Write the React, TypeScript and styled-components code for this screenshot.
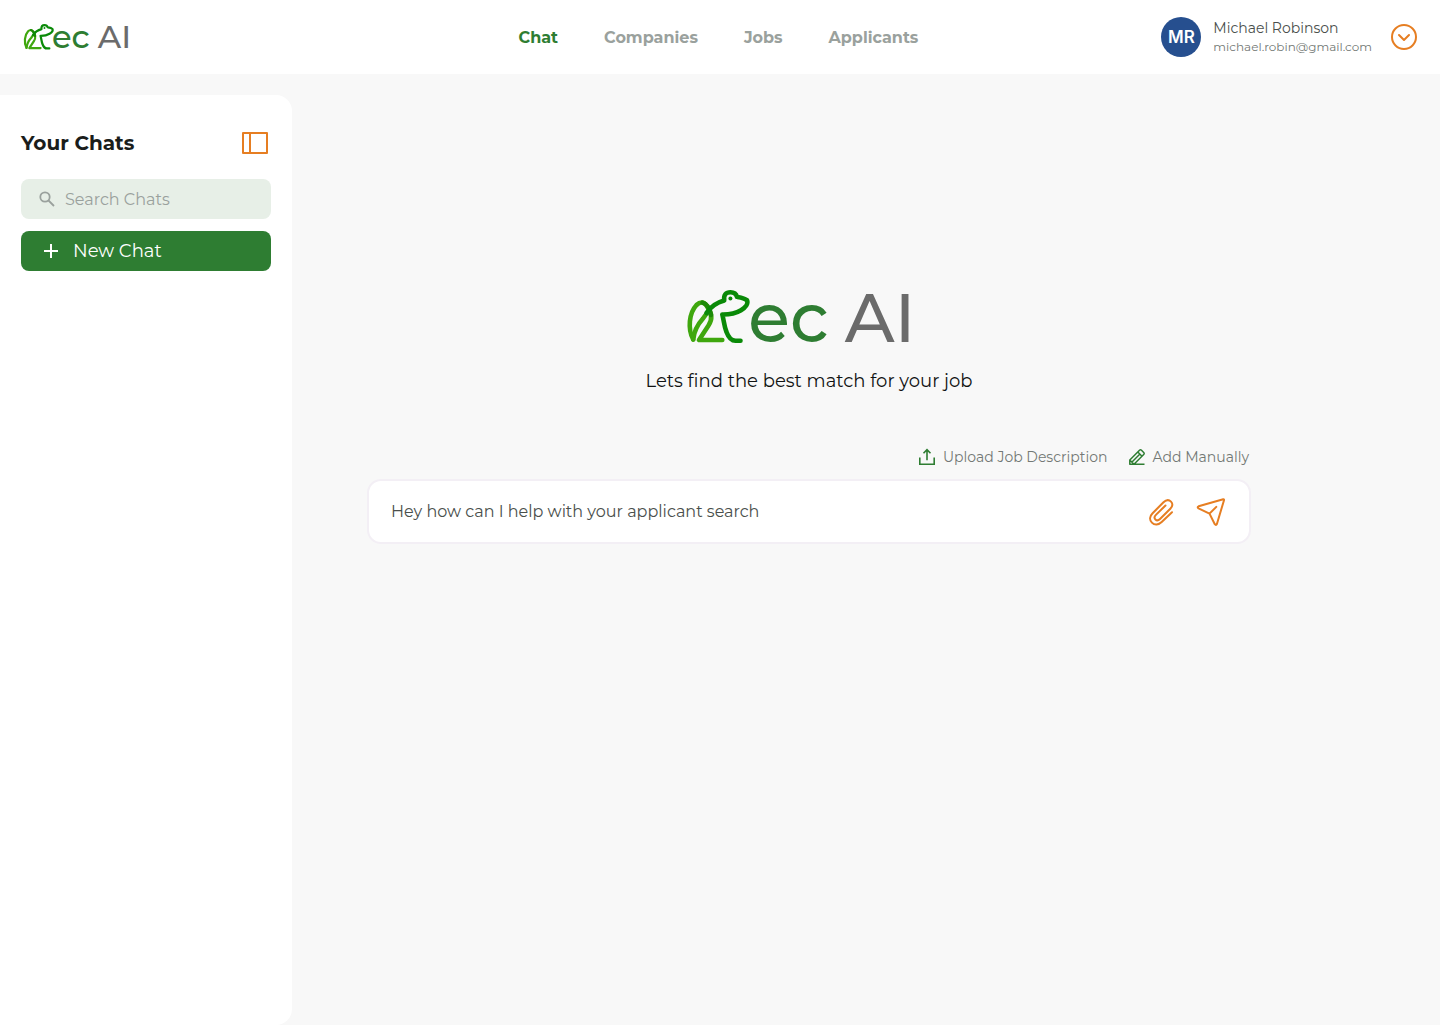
import React from "react";
import styled, { createGlobalStyle } from "styled-components";

const color = {
  green: "#2e7d32",
  orange: "#e67e22",
  page: "#f8f8f8",
  white: "#ffffff",
  ink: "#1a1d1b",
  body: "#4a4f4c",
  muted: "#737975",
  faint: "#9aa19d",
};

const GlobalStyle = createGlobalStyle`
  *, *::before, *::after { box-sizing: border-box; }
  body {
    margin: 0;
    background: ${color.page};
    color: ${color.ink};
    font-family: Montserrat, Inter, "Open Sans", sans-serif;
  }
  button, input { font: inherit; color: inherit; }
  h1, h2, p { margin: 0; }
  svg { display: block; flex: none; }
`;

const Page = styled.div`
  display: flex;
  flex-direction: column;
  gap: 21px;
  min-height: 100vh;
`;

const Header = styled.header`
  display: grid;
  grid-template-columns: 1fr auto 1fr;
  align-items: center;
  height: 74px;
  padding: 0 22px 0 24px;
  background: ${color.white};
`;

const Nav = styled.nav`
  display: flex;
  gap: 46px;
  padding: 2px 5px 0 0;
`;

const NavLink = styled.a<{ $active?: boolean }>`
  color: ${(p) => (p.$active ? color.green : color.faint)};
  font-size: 16px;
  font-weight: 700;
  line-height: 20px;
  text-decoration: none;
`;

const Account = styled.div`
  display: flex;
  align-items: center;
  justify-self: end;
`;

const Avatar = styled.span`
  display: grid;
  place-items: center;
  width: 40px;
  height: 40px;
  margin-right: 12px;
  border-radius: 50%;
  background: #264f8f;
  color: ${color.white};
  font-family: Inter, sans-serif;
  font-size: 17px;
  font-weight: 600;
`;

const Person = styled.div`
  display: flex;
  flex-direction: column;
  margin-right: 18px;
`;

const PersonName = styled.span`
  color: ${color.body};
  font-size: 14px;
  line-height: 20px;
`;

const PersonMail = styled.span`
  color: ${color.muted};
  font-size: 12px;
  line-height: 18px;
`;

const IconButton = styled.button`
  display: grid;
  place-items: center;
  padding: 0;
  border: 0;
  background: none;
  color: ${color.orange};
  cursor: pointer;
`;

const Body = styled.div`
  display: flex;
  flex: 1;
`;

const Sidebar = styled.aside`
  display: flex;
  flex: none;
  flex-direction: column;
  gap: 12px;
  width: 292px;
  padding: 34px 21px;
  border-radius: 0 16px 16px 0;
  background: ${color.white};
`;

const SidebarHead = styled.div`
  display: flex;
  align-items: center;
  justify-content: space-between;
  height: 28px;
  margin-bottom: 10px;
  padding-right: 2px;
`;

const SidebarTitle = styled.h2`
  font-size: 20px;
  font-weight: 700;
  line-height: 28px;
`;

const SearchBox = styled.label`
  display: flex;
  align-items: center;
  gap: 8px;
  height: 40px;
  padding: 0 16px;
  border-radius: 8px;
  background: #e7efe7;
  color: ${color.faint};
`;

const SearchInput = styled.input`
  flex: 1;
  min-width: 0;
  padding: 2px 0 0;
  border: 0;
  outline: 0;
  background: none;
  font-size: 16px;
  line-height: 20px;
  &::placeholder { color: ${color.faint}; opacity: 1; }
`;

const NewChatButton = styled.button`
  display: flex;
  align-items: center;
  gap: 12px;
  height: 40px;
  padding: 0 20px;
  border: 0;
  border-radius: 8px;
  background: ${color.green};
  color: ${color.white};
  font-size: 18px;
  cursor: pointer;
`;

const Main = styled.main`
  display: flex;
  flex: 1;
  flex-direction: column;
  padding: 193px 189px 40px 75px;
`;

const Hero = styled.div`
  display: flex;
  flex-direction: column;
  align-items: center;
  gap: 25px;
  margin-bottom: 54px;
`;

const HeroLogo = styled.h1`
  padding-right: 12px;
  font-weight: 400;
`;

const Tagline = styled.p`
  color: #111312;
  font-size: 18px;
  line-height: 24px;
`;

const Actions = styled.div`
  display: flex;
  justify-content: flex-end;
  gap: 20px;
  margin-bottom: 12px;
  padding-right: 2px;
`;

const ActionButton = styled.button`
  display: flex;
  align-items: center;
  gap: 7px;
  padding: 0;
  border: 0;
  background: none;
  color: ${color.muted};
  font-size: 14px;
  font-weight: 400;
  line-height: 20px;
  cursor: pointer;
  svg { color: ${color.green}; }
`;

const Composer = styled.form`
  display: flex;
  align-items: center;
  gap: 20px;
  height: 65px;
  padding: 1px 23px 0 22px;
  border: 2px solid #f3eff5;
  border-radius: 14px;
  background: ${color.white};
`;

const ComposerInput = styled.input`
  flex: 1;
  min-width: 0;
  padding: 0;
  border: 0;
  outline: 0;
  background: none;
  font-size: 16px;
  line-height: 24px;
  &::placeholder { color: ${color.body}; opacity: 1; }
`;

const LogoRow = styled.span<{ $large?: boolean }>`
  display: flex;
  align-items: center;
  height: ${(p) => (p.$large ? 56 : 28)}px;
  font-size: ${(p) => (p.$large ? 68 : 32)}px;
  line-height: ${(p) => (p.$large ? 56 : 28)}px;
`;

const LogoText = styled.span<{ $large?: boolean }>`
  display: flex;
  gap: ${(p) => (p.$large ? 16 : 8)}px;
  padding-top: ${(p) => (p.$large ? 4 : 0)}px;
  color: ${color.green};
  font-weight: 500;
`;

const LogoGray = styled.span`
  color: #6b6b6b;
`;

function Logo({ large }: { large?: boolean }) {
  return (
    <LogoRow $large={large}>
      <svg
        width={large ? 58 : 28}
        height={large ? 56 : 27}
        viewBox={large ? "3 0 58 56" : "1 2 58 56"}
        overflow="visible"
        fill="none"
        strokeWidth="4.6"
        strokeLinecap="round"
        strokeLinejoin="round"
        aria-hidden="true"
      >
        <path
          d="M6.200 51.500C0.500 41 2 25 9.500 17C13 13.500 17 13.500 19.500 17.500C24.500 24 26 31 21.500 37.500L12 52H35.300"
          stroke="#3fa70e"
        />
        <path d="M6.200 51.500C7 43 11 36 16 30.500L20 25" stroke="#3fa70e" />
        <path d="M15.500 14.600C20 16 23 21 24 27" stroke="#1e8a08" />
        <path
          d="M19.500 25C24 18 30 14.500 37.200 12.500C36.500 6.500 39 4.200 43.500 4.200C47 4.200 49.200 5.800 50 8.800C54 9.500 57.500 10 60 12.300C61.500 15.500 58.500 19.500 54 22.200C48.500 25.500 42 26.600 35.300 26.500C37 33 37.200 38.500 39.500 44C41.500 49.500 45 53.200 49.500 52.700H53.500"
          stroke="#0a8a08"
        />
        <circle cx="43.400" cy="10.400" r="2" fill="#0a8a08" />
      </svg>
      <LogoText $large={large}>
        ec
        <LogoGray>AI</LogoGray>
      </LogoText>
    </LogoRow>
  );
}

const ChevronCircleIcon = () => (
  <svg width="28" height="28" viewBox="0 0 28 28" fill="none" stroke="currentColor" strokeWidth="2" strokeLinecap="round" strokeLinejoin="round" aria-hidden="true">
    <circle cx="14" cy="14" r="12" />
    <path d="M9 12l5 5 5-5" />
  </svg>
);

const PanelIcon = () => (
  <svg width="28" height="24" viewBox="0 0 28 24" fill="none" stroke="currentColor" strokeWidth="2" strokeLinejoin="round" aria-hidden="true">
    <path d="M2 2h24v20H2zM9 2v20" />
  </svg>
);

const SearchIcon = () => (
  <svg width="20" height="20" viewBox="0 0 20 20" fill="none" stroke="currentColor" strokeWidth="1.800" aria-hidden="true">
    <circle cx="8" cy="8" r="4.700" />
    <path d="M11.500 11.500l5.500 5.500" />
  </svg>
);

const PlusIcon = () => (
  <svg width="20" height="20" viewBox="0 0 20 20" fill="none" stroke="currentColor" strokeWidth="2" aria-hidden="true">
    <path d="M10 3v14M3 10h14" />
  </svg>
);

const UploadIcon = () => (
  <svg width="18" height="18" viewBox="0 0 18 18" fill="none" stroke="currentColor" strokeWidth="1.600" aria-hidden="true">
    <path d="M1.800 9.500v6.700h14.400V9.500M9 12.200V2M5.500 5.200L9 1.700l3.500 3.500" />
  </svg>
);

const PencilIcon = () => (
  <svg width="18" height="18" viewBox="0 0 18 18" fill="none" stroke="currentColor" strokeWidth="1.500" strokeLinejoin="round" aria-hidden="true">
    <path d="M1.800 16.300V12L11.500 2.300Q12.500 1.300 13.500 2.300L15.700 4.500Q16.700 5.500 15.700 6.500L6 16.200zM4 14L12.200 5.800M9.800 4L14 8.200M1.800 12L6 16.200M1.500 16.300H16.500" />
  </svg>
);

const PaperclipIcon = () => (
  <svg width="30" height="30" viewBox="0 0 30 30" fill="none" stroke="currentColor" strokeWidth="2" strokeLinecap="round" strokeLinejoin="round" aria-hidden="true">
    <path d="M26 15.300L15.700 25C12.400 28.200 8.500 28.300 5.900 25.600C3.200 22.900 3.600 19.200 6.600 16.200L17.500 5.300C20 2.800 23 2.600 25 4.600C27 6.600 26.700 9.400 24.300 11.800L14 22C12.400 23.600 10.700 23.800 9.400 22.500C8.100 21.200 8.300 19.500 9.900 17.900L19.500 8.500" />
  </svg>
);

const SendIcon = () => (
  <svg width="30" height="30" viewBox="0 0 30 30" fill="none" stroke="currentColor" strokeWidth="2" strokeLinecap="round" strokeLinejoin="round" aria-hidden="true">
    <path d="M27.200 2.200L2.600 9.300Q.800 10.200 2.500 11.400L13.500 16.600L18.800 27.200Q20 28.800 20.900 27L28 3.200Q28.200 1.900 27.200 2.200zM13.500 16.600L20.300 9.900" />
  </svg>
);

const links = ["Chat", "Companies", "Jobs", "Applicants"];

export default function App() {
  return (
    <Page>
      <GlobalStyle />
      <Header>
        <Logo />
        <Nav aria-label="Main">
          {links.map((label, i) => (
            <NavLink key={label} href={`#${label.toLowerCase()}`} $active={i === 0}>
              {label}
            </NavLink>
          ))}
        </Nav>
        <Account>
          <Avatar>MR</Avatar>
          <Person>
            <PersonName>Michael Robinson</PersonName>
            <PersonMail>michael.robin@gmail.com</PersonMail>
          </Person>
          <IconButton type="button" aria-label="Account menu">
            <ChevronCircleIcon />
          </IconButton>
        </Account>
      </Header>
      <Body>
        <Sidebar>
          <SidebarHead>
            <SidebarTitle>Your Chats</SidebarTitle>
            <IconButton type="button" aria-label="Toggle sidebar">
              <PanelIcon />
            </IconButton>
          </SidebarHead>
          <SearchBox>
            <SearchIcon />
            <SearchInput type="search" placeholder="Search Chats" aria-label="Search Chats" />
          </SearchBox>
          <NewChatButton type="button">
            <PlusIcon />
            New Chat
          </NewChatButton>
        </Sidebar>
        <Main>
          <Hero>
            <HeroLogo>
              <Logo large />
            </HeroLogo>
            <Tagline>Lets find the best match for your job</Tagline>
          </Hero>
          <Actions>
            <ActionButton type="button">
              <UploadIcon />
              Upload Job Description
            </ActionButton>
            <ActionButton type="button">
              <PencilIcon />
              Add Manually
            </ActionButton>
          </Actions>
          <Composer onSubmit={(e) => e.preventDefault()}>
            <ComposerInput
              type="text"
              placeholder="Hey how can I help with your applicant search"
              aria-label="Message"
            />
            <IconButton type="button" aria-label="Attach file">
              <PaperclipIcon />
            </IconButton>
            <IconButton type="submit" aria-label="Send">
              <SendIcon />
            </IconButton>
          </Composer>
        </Main>
      </Body>
    </Page>
  );
}
